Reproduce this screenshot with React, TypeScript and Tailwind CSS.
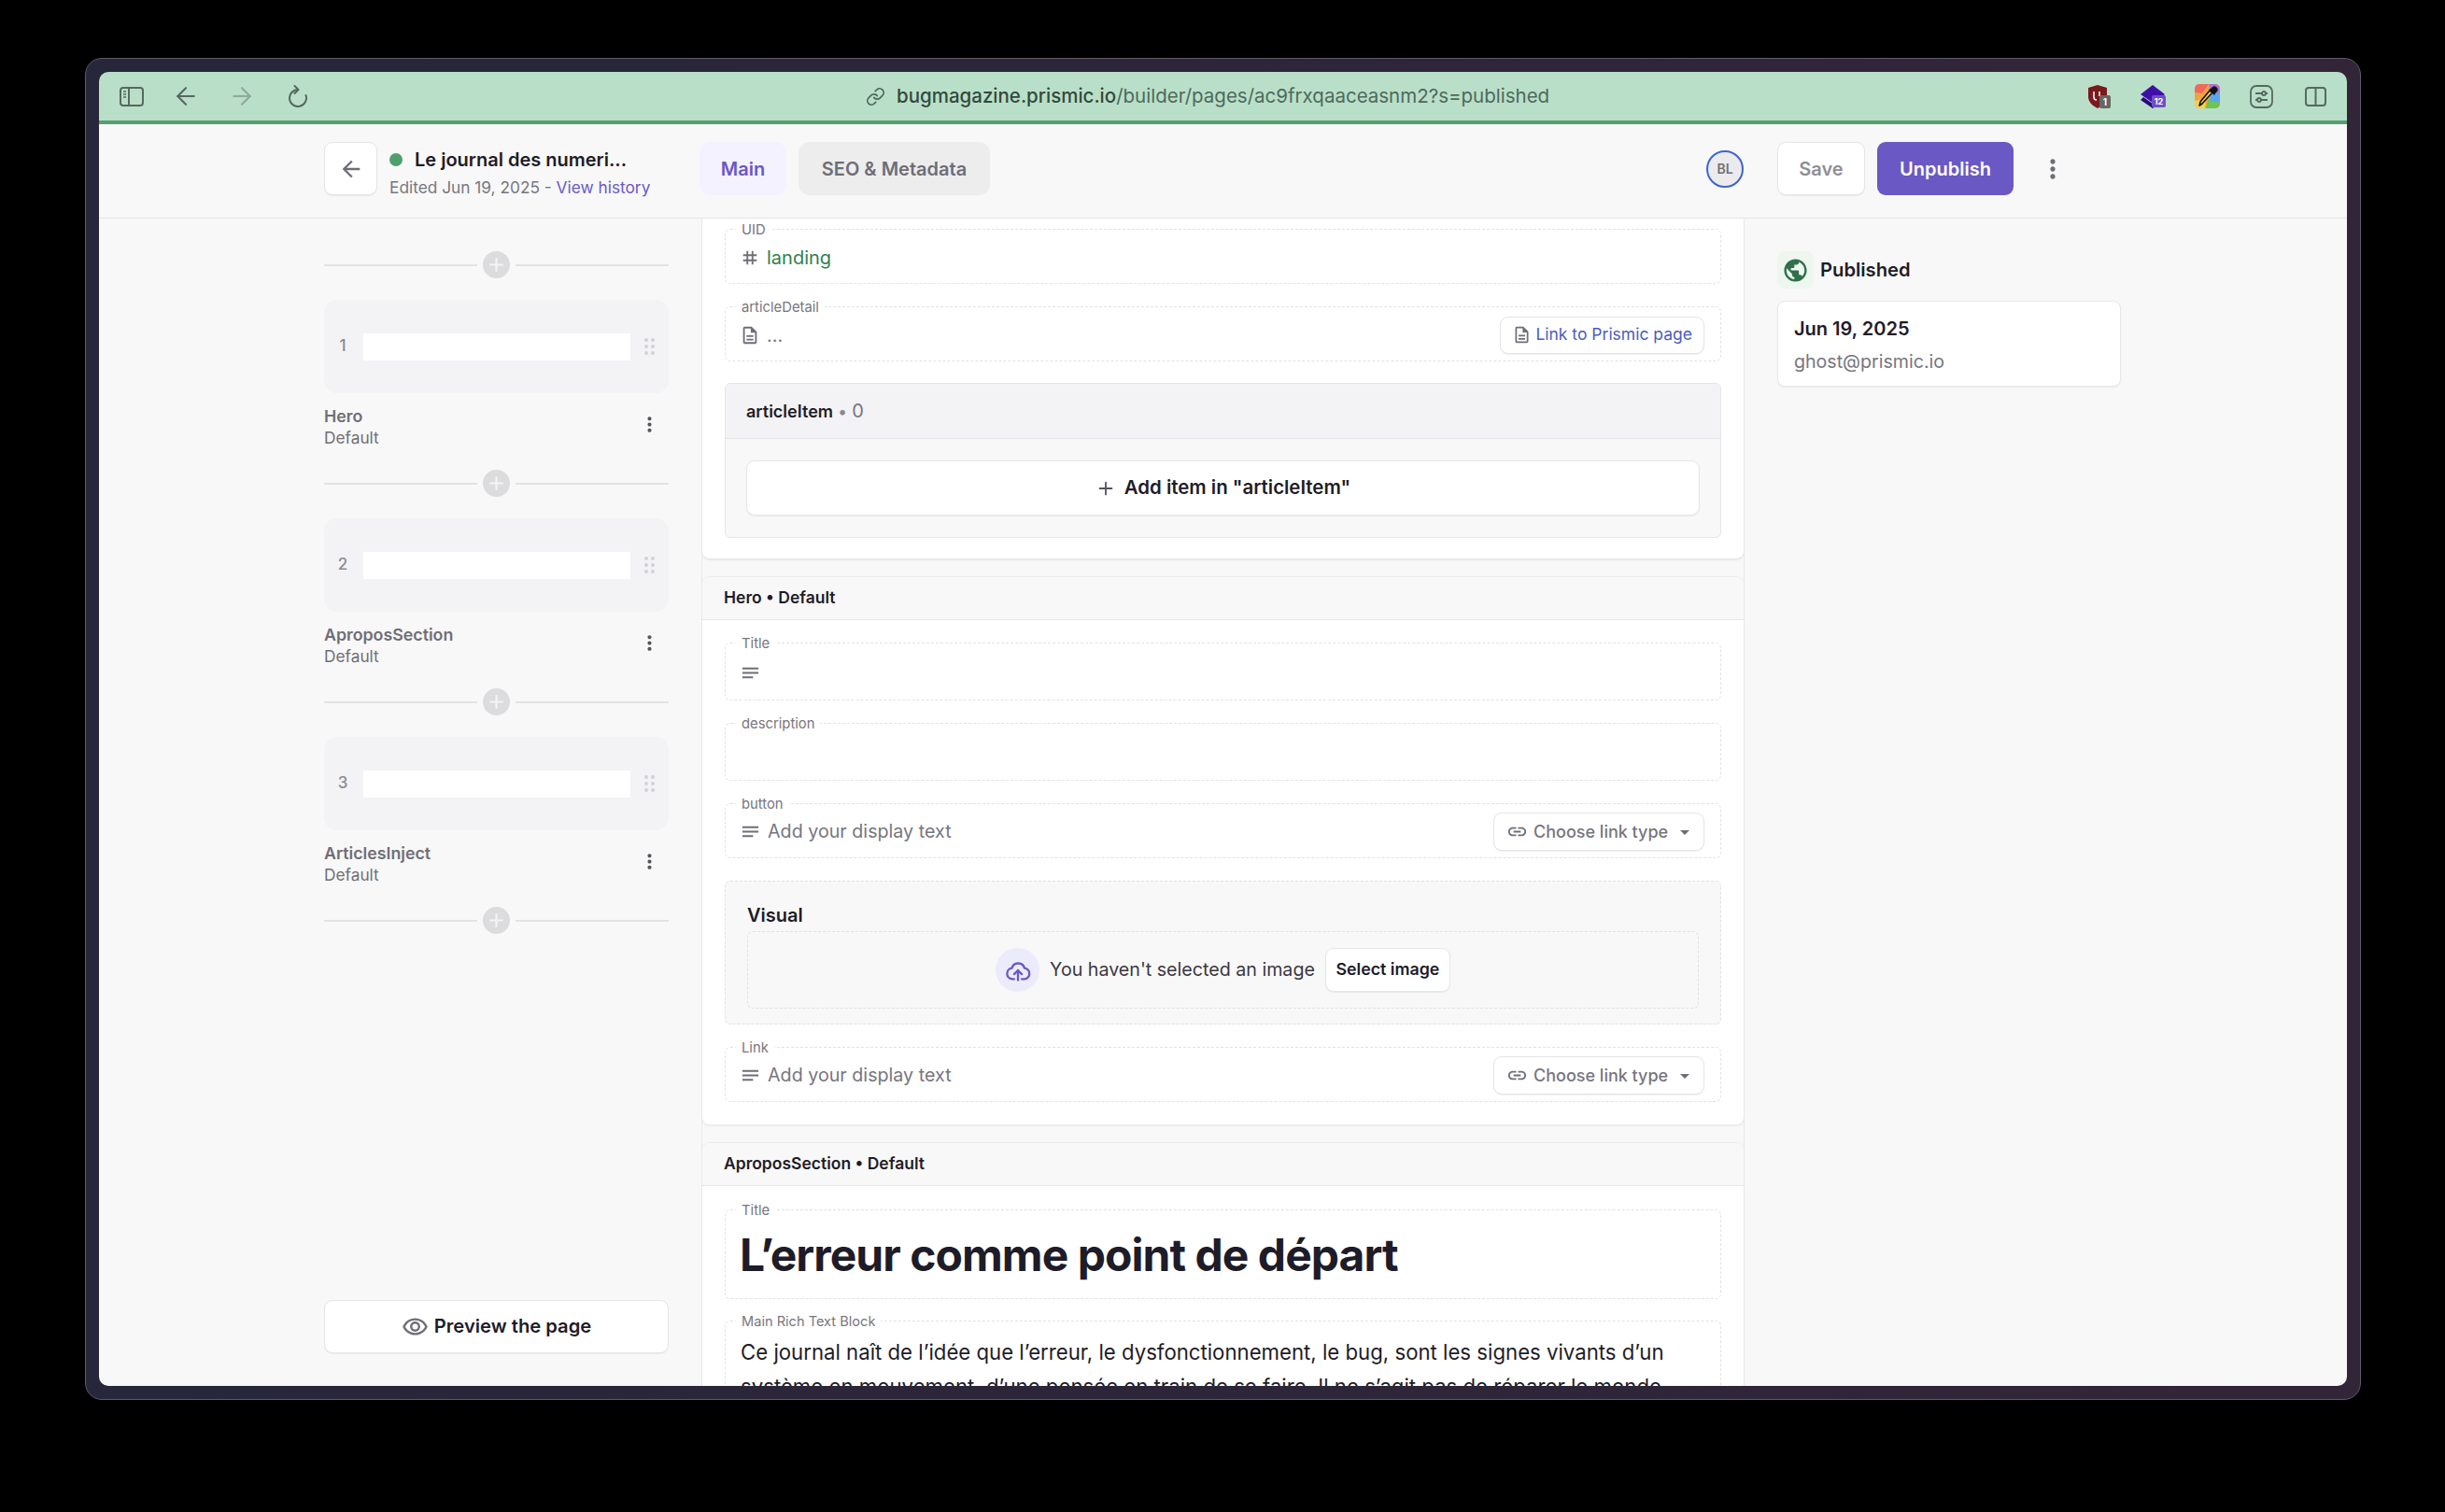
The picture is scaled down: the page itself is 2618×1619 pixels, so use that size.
import React from 'react';
import { ArrowLeft, ArrowRight, Link as LinkIcon, Plus } from 'lucide-react';
import {
  MdAdd,
  MdArrowBack,
  MdArrowDropDown,
  MdLink,
  MdMoreVert,
  MdNotes,
  MdOutlineDescription,
  MdOutlineRemoveRedEye,
  MdPublic,
  MdTag,
} from 'react-icons/md';

const slices = [
  { id: 1, name: 'Hero' },
  { id: 2, name: 'AproposSection' },
  { id: 3, name: 'ArticlesInject' },
];

const SidebarToggleIcon = () => (
  <svg width="26" height="21" viewBox="0 0 26 21" fill="none" stroke="#56695e" strokeWidth="2">
    <rect x="1" y="1" width="24" height="19" rx="3" />
    <path d="M10 1v19" />
    <path d="M4 5h3M4 8h3M4 11h3" strokeWidth="1.4" />
  </svg>
);

const ReloadIcon = () => (
  <svg width="22" height="24" viewBox="0 0 22 24" fill="none" stroke="#56695e" strokeWidth="2" strokeLinecap="round" strokeLinejoin="round">
    <path d="M11 5A9 9 0 1 0 19.5 11" />
    <path d="M7.5 1l4 4-4 4" />
  </svg>
);

const UBlockIcon = () => (
  <div className="relative h-[25px] w-[24px]">
    <svg width="20" height="25" viewBox="0 0 20 25">
      <path d="M10 0l10 3v9c0 6-4 10-10 13C4 22 0 18 0 12V3z" fill="#7b1a1c" />
      <path d="M6 7v6a3 3 0 0 0 3 3M12 7v5" stroke="#fff" strokeWidth="1.5" fill="none" />
    </svg>
    <span className="absolute bottom-[0px] right-[0px] flex h-[14px] w-[12px] items-center justify-center rounded-[2px] bg-[#666] text-[10px] font-bold leading-none text-white">
      1
    </span>
  </div>
);

const StackIcon = () => (
  <div className="relative h-[25px] w-[27px]">
    <svg width="26" height="25" viewBox="0 0 26 25">
      <path d="M13 0l13 10-13 9L0 10z" fill="#3f0ea8" />
      <path d="M3 13l10 7 6-4v5l-6 4L0 16z" fill="#2a0a78" />
    </svg>
    <span className="absolute bottom-[1px] right-[0px] flex h-[13px] w-[15px] items-center justify-center rounded-[2px] bg-[#6f4fc4] text-[9px] font-bold leading-none text-white">
      12
    </span>
  </div>
);

const PickerIcon = () => (
  <svg width="27" height="26" viewBox="0 0 27 26">
    <defs>
      <clipPath id="tile">
        <rect width="27" height="26" rx="5" />
      </clipPath>
    </defs>
    <g clipPath="url(#tile)">
      <rect width="27" height="26" fill="#f2a33c" />
      <path d="M0 0h15L8 10 0 9z" fill="#ef6a5a" />
      <path d="M15 0h12v12l-10-2z" fill="#b070d8" />
      <path d="M27 10v10l-12-2 4-10z" fill="#58a6f0" />
      <path d="M27 20v6H12l2-9z" fill="#6dc552" />
      <path d="M0 18l12-2-1 10H0z" fill="#f6d04a" />
    </g>
    <path d="M19 9L8 21l-3 2 1-4L16 7z" fill="#f4d24a" stroke="#111" strokeWidth="1.6" strokeLinejoin="round" />
    <path d="M15 6l6 6 1.5-2.5 1-1a3.4 3.4 0 0 0-5-5l-1 1z" fill="#111" />
  </svg>
);

const TuneIcon = () => (
  <svg width="25" height="25" viewBox="0 0 25 25" fill="none" stroke="#56695e" strokeWidth="1.8">
    <rect x="1" y="1" width="23" height="23" rx="6" />
    <path d="M6 9h7M17 9h2M6 16h2M12 16h7" />
    <circle cx="15" cy="9" r="2" />
    <circle cx="10" cy="16" r="2" />
  </svg>
);

const SplitIcon = () => (
  <svg width="23" height="21" viewBox="0 0 23 21" fill="none" stroke="#56695e" strokeWidth="2">
    <rect x="1" y="1" width="21" height="19" rx="3" />
    <path d="M11.5 1v19" />
  </svg>
);

const UploadIcon = () => (
  <svg width="28" height="28" viewBox="0 0 24 24" fill="none" stroke="currentColor" strokeWidth="2" strokeLinecap="round" strokeLinejoin="round">
    <path d="M8.5 20H7a5 5 0 0 1-.6-9.96A6 6 0 0 1 18 10a5 5 0 0 1-1 10h-1.5" />
    <path d="M12 21v-9" />
    <path d="M8.5 15.5L12 12l3.5 3.5" />
  </svg>
);

const GripIcon = () => (
  <div className="grid grid-cols-2 gap-x-[3px] gap-y-[3px]">
    {[0, 1, 2, 3, 4, 5].map((dot) => (
      <span key={dot} className="h-[4px] w-[4px] rounded-full bg-[#d2d1d6]" />
    ))}
  </div>
);

const Divider = () => (
  <div className="flex h-[29px] items-center justify-between">
    <div className="h-[2px] w-[164px] bg-[#e3e3e3]" />
    <div className="flex h-[29px] w-[29px] items-center justify-center rounded-full bg-[#dcdcde] text-[#f4f4f4]">
      <MdAdd size={25} />
    </div>
    <div className="h-[2px] w-[164px] bg-[#e3e3e3]" />
  </div>
);

const Slice = ({ id, name }: { id: number; name: string }) => (
  <div>
    <div className="mt-[23px] flex h-[100px] items-center rounded-[14px] bg-[#f3f2f5]">
      <span className="w-[42px] pr-[2px] text-center text-[17px] font-medium text-[#8b8a92]">{id}</span>
      <div className="h-[29px] w-[286px] bg-white" />
      <div className="ml-[15px]">
        <GripIcon />
      </div>
    </div>
    <div className="flex h-[82px] justify-between pt-[13px]">
      <div>
        <div className="text-[17.8px] font-semibold leading-[23px] text-[#6f6e77]">{name}</div>
        <div className="text-[17.3px] leading-[23px] text-[#6f6e77]">Default</div>
      </div>
      <div className="mr-[8px] mt-[8px] text-[#55545c]">
        <MdMoreVert size={25} />
      </div>
    </div>
    <Divider />
  </div>
);

const Field = ({
  label,
  height,
  children,
}: {
  label: string;
  height: string;
  children?: React.ReactNode;
}) => (
  <div className={`relative flex items-center rounded-[6px] border border-dashed border-[#e2e2e4] pl-[15px] pr-[17px] pt-[2px] ${height}`}>
    <span className="absolute -top-[9px] left-[11px] bg-white px-[6px] text-[14.8px] leading-[18px] text-[#77767e]">
      {label}
    </span>
    {children}
  </div>
);

const LinkTypeButton = () => (
  <button className="ml-auto flex h-[41px] w-[226px] items-center rounded-[9px] border border-[#e4e4e6] bg-white pl-[13px] text-[18px] font-medium text-[#77767e] shadow-[0_1px_1px_rgba(0,0,0,0.06)]">
    <MdLink size={23} className="mr-[6px] text-[#6f6e77]" />
    Choose link type
    <MdArrowDropDown size={24} className="ml-[6px] text-[#6f6e77]" />
  </button>
);

const DisplayText = () => (
  <>
    <MdNotes size={23} className="mr-[7px] shrink-0 text-[#6f6e77]" />
    <span className="text-[19.7px] text-[#77767e]">Add your display text</span>
  </>
);

const CardHeader = ({ title }: { title: string }) => (
  <div className="flex h-[46px] items-center rounded-t-[8px] border-b border-[#e6e6e8] bg-[#f8f8f8] px-[23px] text-[17.5px] font-semibold text-[#1e1c28]">
    {title}
  </div>
);

export default function App() {
  return (
    <div className="h-[1619px] w-[2618px] overflow-hidden bg-black pl-[91px] pt-[62px] [font-family:Inter,sans-serif]">
      <div className="h-[1437px] w-[2437px] rounded-[18px] border border-[#5e5b66] bg-gradient-to-r from-[#27263a] to-[#332538] p-[14px]">
        <div className="flex h-full flex-col overflow-hidden rounded-[10px]">
          {/* browser toolbar */}
          <div className="flex h-[56px] shrink-0 items-center border-b-4 border-[#559f70] bg-[#b9dfc9] pl-[22px] pr-[22px]">
            <div className="flex w-[799px] items-center">
              <SidebarToggleIcon />
              <ArrowLeft size={30} strokeWidth={1.7} className="ml-[30px] text-[#56695e]" />
              <ArrowRight size={30} strokeWidth={1.7} className="ml-[30px] text-[#8fa99a]" />
              <div className="ml-[34px]">
                <ReloadIcon />
              </div>
            </div>
            <LinkIcon size={21} className="text-[#4e6a5a]" />
            <div className="ml-[12px] text-[20.5px] text-[#4e6a5a]">
              <span className="font-medium text-[#33493d]">bugmagazine.prismic.io</span>/builder/pages/ac9frxqaaceasnm2?s=published
            </div>
            <div className="ml-auto flex items-center">
              <UBlockIcon />
              <div className="ml-[32px]">
                <StackIcon />
              </div>
              <div className="ml-[31px]">
                <PickerIcon />
              </div>
              <div className="ml-[32px]">
                <TuneIcon />
              </div>
              <div className="ml-[34px]">
                <SplitIcon />
              </div>
            </div>
          </div>

          {/* page header */}
          <div className="flex h-[101px] shrink-0 items-center border-b border-[#e4e4e6] bg-[#f8f8f8] pb-[5px] pl-[241px]">
            <button className="flex h-[57px] w-[57px] items-center justify-center rounded-[9px] border border-[#e6e6e8] bg-white text-[#6f6e77] shadow-[0_1px_1px_rgba(0,0,0,0.06)]">
              <MdArrowBack size={28} />
            </button>
            <div className="ml-[13px] w-[332px] pt-[10px]">
              <div className="flex items-center">
                <span className="h-[14px] w-[14px] rounded-full bg-[#4f9f6e]" />
                <span className="ml-[13px] text-[20px] font-semibold leading-[30px] text-[#1e1c28]">Le journal des numeri...</span>
              </div>
              <div className="text-[17.3px] leading-[30px] text-[#77767e]">
                Edited Jun 19, 2025 - <span className="text-[#6a58c5]">View history</span>
              </div>
            </div>
            <div className="flex h-[57px] w-[93px] items-center justify-center rounded-[12px] bg-[#f4f2fe] text-[20px] font-semibold text-[#6a58c5]">
              Main
            </div>
            <div className="ml-[13px] flex h-[57px] w-[205px] items-center justify-center rounded-[12px] bg-[#ededed] text-[20px] font-semibold text-[#6f6e77]">
              SEO &amp; Metadata
            </div>
            <div className="ml-[767px] flex h-[40px] w-[40px] items-center justify-center rounded-full border-2 border-[#3f63d0] bg-[#ebebee] text-[14px] font-semibold text-[#6f6e77]">
              BL
            </div>
            <button className="ml-[36px] flex h-[57px] w-[94px] items-center justify-center rounded-[9px] border border-[#e6e6e8] bg-white text-[20px] font-semibold text-[#8f8e96] shadow-[0_1px_1px_rgba(0,0,0,0.06)]">
              Save
            </button>
            <button className="ml-[13px] flex h-[57px] w-[146px] items-center justify-center rounded-[9px] bg-[#6a58c5] text-[20px] font-semibold text-white">
              Unpublish
            </button>
            <div className="ml-[26px] text-[#6f6e77]">
              <MdMoreVert size={32} />
            </div>
          </div>

          <div className="flex min-h-0 flex-1 bg-[#f8f8f8]">
            {/* slices sidebar */}
            <aside className="flex w-[645px] shrink-0 flex-col pb-[35px] pl-[241px] pr-[35px] pt-[35px]">
              <Divider />
              {slices.map((slice) => (
                <Slice key={slice.id} id={slice.id} name={slice.name} />
              ))}
              <button className="mt-auto flex h-[57px] items-center justify-center rounded-[9px] border border-[#e6e6e8] bg-white text-[20.2px] font-semibold text-[#1e1c28] shadow-[0_1px_1px_rgba(0,0,0,0.06)]">
                <MdOutlineRemoveRedEye size={29} className="mr-[6px] text-[#6f6e77]" />
                Preview the page
              </button>
            </aside>

            {/* main form */}
            <main className="flex w-[1117px] shrink-0 flex-col gap-[20px] overflow-hidden border-x border-[#e8e8ea]">
              <section className="flex shrink-0 flex-col gap-[24px] rounded-b-[8px] bg-white px-[24px] pb-[22px] pt-[11px] shadow-[0_1px_3px_rgba(0,0,0,0.12)]">
                <Field label="UID" height="h-[59px]">
                  <MdTag size={22} className="mr-[7px] text-[#6f6e77]" />
                  <span className="text-[20px] text-[#30804f]">landing</span>
                </Field>
                <Field label="articleDetail" height="h-[59px]">
                  <MdOutlineDescription size={22} className="mr-[7px] text-[#6f6e77]" />
                  <span className="text-[20px] text-[#77767e]">...</span>
                  <button className="ml-auto flex h-[40px] items-center rounded-[9px] border border-[#e4e4e6] bg-white px-[12px] text-[17.5px] text-[#4b5dbb] shadow-[0_1px_1px_rgba(0,0,0,0.06)]">
                    <MdOutlineDescription size={21} className="mr-[4px] text-[#6f6e77]" />
                    Link to Prismic page
                  </button>
                </Field>
                <div className="-mt-[1px] h-[166px] overflow-hidden rounded-[6px] border border-[#e6e6e8] bg-[#f8f8f8]">
                  <div className="flex h-[59px] items-center border-b border-[#e4e4e6] bg-[#f3f2f5] pl-[22px] text-[18px]">
                    <span className="font-semibold text-[#1e1c28]">articleItem</span>
                    <span className="ml-[5px] text-[#8b8a92]">•</span>
                    <span className="ml-[5px] text-[20px] text-[#77767e]">0</span>
                  </div>
                  <button className="ml-[22px] mt-[23px] flex h-[59px] w-[1021px] items-center justify-center rounded-[9px] border border-[#e6e6e8] bg-white text-[20.4px] font-semibold text-[#1e1c28] shadow-[0_1px_1px_rgba(0,0,0,0.06)]">
                    <Plus size={22} className="mr-[9px] text-[#55545c]" />
                    Add item in "articleItem"
                  </button>
                </div>
              </section>

              <section className="shrink-0 rounded-[8px] bg-white shadow-[0_0_0_1px_#ececee,0_1px_3px_rgba(0,0,0,0.12)]">
                <CardHeader title="Hero • Default" />
                <div className="flex flex-col gap-[24px] px-[24px] pb-[24px] pt-[24px]">
                  <Field label="Title" height="h-[62px]">
                    <MdNotes size={23} className="text-[#6f6e77]" />
                  </Field>
                  <Field label="description" height="h-[62px]" />
                  <Field label="button" height="h-[59px]">
                    <DisplayText />
                    <LinkTypeButton />
                  </Field>
                  <div className="h-[154px] rounded-[6px] border border-dashed border-[#e2e2e4] bg-[#f8f8f8] px-[23px] pt-[21px]">
                    <div className="text-[20px] font-semibold leading-[30px] text-[#1e1c28]">Visual</div>
                    <div className="mt-[2px] flex h-[83px] items-center justify-center gap-[11px] rounded-[6px] border border-dashed border-[#e2e2e4]">
                      <div className="flex h-[47px] w-[47px] items-center justify-center rounded-full bg-[#ecebfb] text-[#6a58c5]">
                        <UploadIcon />
                      </div>
                      <span className="text-[19.65px] text-[#3a3942]">You haven't selected an image</span>
                      <button className="flex h-[47px] w-[134px] items-center justify-center rounded-[9px] border border-[#e6e6e8] bg-white text-[17.8px] font-semibold text-[#1e1c28] shadow-[0_1px_1px_rgba(0,0,0,0.06)]">
                        Select image
                      </button>
                    </div>
                  </div>
                  <Field label="Link" height="h-[59px]">
                    <DisplayText />
                    <LinkTypeButton />
                  </Field>
                </div>
              </section>

              <section className="shrink-0 rounded-t-[8px] bg-white shadow-[0_0_0_1px_#ececee,0_1px_3px_rgba(0,0,0,0.12)]">
                <CardHeader title="AproposSection • Default" />
                <div className="flex flex-col gap-[23px] px-[24px] pt-[25px]">
                  <Field label="Title" height="h-[96px]">
                    <h1 className="whitespace-nowrap text-[48px] font-bold leading-[60px] tracking-[-0.02em] text-[#1e1c28]">L’erreur comme point de départ</h1>
                  </Field>
                  <div className="relative rounded-[6px] border border-dashed border-[#e2e2e4] pb-[16px] pl-[16px] pr-[18px] pt-[14px]">
                    <span className="absolute -top-[9px] left-[11px] bg-white px-[6px] text-[14.6px] leading-[18px] text-[#77767e]">
                      Main Rich Text Block
                    </span>
                    <p className="text-[22.2px] leading-[37px] text-[#1e1c28]">
                      Ce journal naît de l’idée que l’erreur, le dysfonctionnement, le bug, sont les signes vivants d’un
                      <br />
                      système en mouvement, d’une pensée en train de se faire. Il ne s’agit pas de réparer le monde
                    </p>
                  </div>
                </div>
              </section>
            </main>

            {/* status panel */}
            <aside className="pl-[35px] pt-[35px]">
              <div className="flex items-center">
                <div className="flex h-[40px] w-[39px] items-center justify-center rounded-[8px] bg-[#edf7f0] text-[#30704a]">
                  <MdPublic size={29} />
                </div>
                <span className="ml-[7px] text-[20.2px] font-semibold text-[#1e1c28]">Published</span>
              </div>
              <div className="mt-[13px] h-[92px] w-[368px] rounded-[8px] border border-[#e8e8ea] bg-white pl-[17px] pt-[14px] shadow-[0_1px_2px_rgba(0,0,0,0.06)]">
                <div className="text-[20px] font-semibold leading-[30px] text-[#1e1c28]">Jun 19, 2025</div>
                <div className="mt-[5px] text-[19.6px] leading-[30px] text-[#77767e]">ghost@prismic.io</div>
              </div>
            </aside>
          </div>
        </div>
      </div>
    </div>
  );
}
